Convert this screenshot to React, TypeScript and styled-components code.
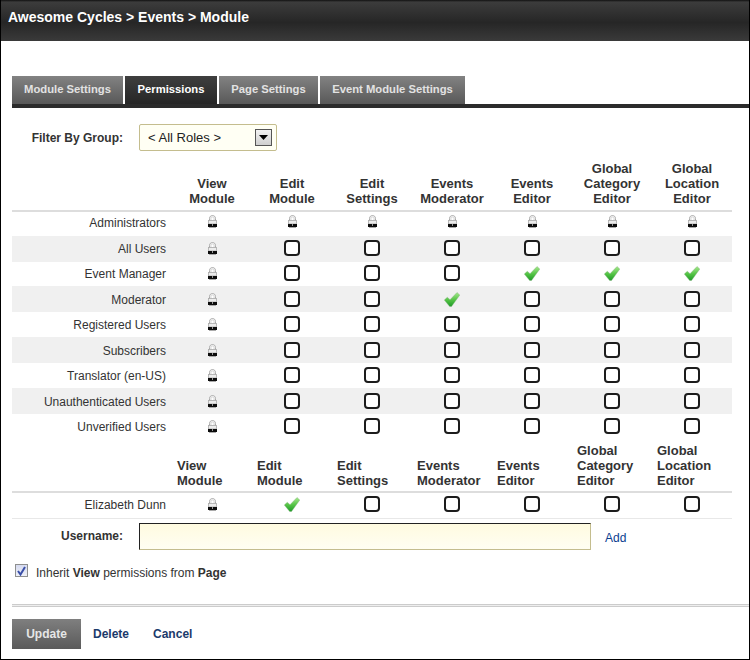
import React from "react";
import styled, { createGlobalStyle } from "styled-components";

const Global = createGlobalStyle`
  html, body { margin: 0; padding: 0; background: #fff; }
  body { font-family: "Liberation Sans", Arial, sans-serif; font-size: 12px; color: #333; }
`;

const Frame = styled.div`
  box-sizing: border-box;
  width: 750px;
  height: 660px;
  border-left: 1px solid #000;
  border-right: 1px solid #000;
  border-bottom: 1px solid #000;
  background: #fff;
  display: flex;
  flex-direction: column;
`;
const TitleBar = styled.div`
  height: 41px;
  flex: none;
  box-sizing: border-box;
  padding: 9px 0 0 7px;
  background: linear-gradient(#111 0, #3c3c3c 5%, #262626 55%, #3a3a3a 100%);
  color: #fff;
  font-size: 14px;
  line-height: 16px;
  font-weight: bold;
`;
const Body = styled.div`
  padding: 35px 0 0 11px;
  display: flex;
  flex-direction: column;
`;
const TabBar = styled.div`
  display: flex;
  gap: 2px;
  height: 32px;
  box-sizing: border-box;
  border-bottom: 4px solid #2b2b2b;
`;
const Tab = styled.div<{ $active?: boolean; $w: number }>`
  width: ${(p) => p.$w}px;
  height: 28px;
  line-height: 27px;
  text-align: center;
  font-weight: bold;
  font-size: 11.25px;
  color: ${(p) => (p.$active ? "#fff" : "#e2e2e2")};
  background: ${(p) =>
    p.$active ? "linear-gradient(#3f3f3f, #262626)" : "linear-gradient(#828282, #585858)"};
`;
const FilterRow = styled.div`
  display: flex;
  align-items: center;
  height: 27px;
  margin-top: 16px;
`;
const FieldLabel = styled.div<{ $pb?: number }>`
  width: 111px;
  text-align: right;
  font-weight: bold;
  color: #333;
  font-size: 12px;
  padding-bottom: ${(p) => p.$pb ?? 0}px;
`;
const SelectBox = styled.div`
  box-sizing: border-box;
  margin-left: 16px;
  width: 138px;
  height: 27px;
  border: 1px solid #c4bd8e;
  border-radius: 2px;
  background: #fffff4;
  display: flex;
  align-items: center;
  justify-content: space-between;
  padding: 0 4px 0 8px;
  font-size: 13px;
  color: #222;
`;
const SelectArrow = styled.div`
  box-sizing: border-box;
  width: 17px;
  height: 17px;
  border: 1px solid #555;
  background: linear-gradient(#f2f2f2, #cfcfcf);
  display: flex;
  align-items: center;
  justify-content: center;
`;
const Grid = styled.div`
  display: grid;
  grid-template-columns: 160px repeat(7, 80px);
  width: 720px;
`;
const HeadCell = styled.div<{ $left?: boolean }>`
  display: flex;
  align-items: flex-end;
  justify-content: ${(p) => (p.$left ? "flex-start" : "center")};
  text-align: ${(p) => (p.$left ? "left" : "center")};
  padding: 0 ${(p) => (p.$left ? "0" : "3px")} ${(p) => (p.$left ? "3px" : "4px")} ${(p) => (p.$left ? "5px" : "3px")};
  font-size: 13px;
  line-height: 15px;
  font-weight: bold;
  color: #333;
  border-bottom: 2px solid #ddd;
  box-sizing: border-box;
  white-space: pre-line;
`;
const HeadRow = styled(Grid)<{ $h: number; $mt: number }>`
  height: ${(p) => p.$h}px;
  margin-top: ${(p) => p.$mt}px;
`;
const Row = styled(Grid)<{ $alt?: boolean; $h: number; $line?: boolean; $pb?: number }>`
  height: ${(p) => p.$h}px;
  align-items: center;
  background: ${(p) => (p.$alt ? "#f0f0f0" : "#fff")};
  box-sizing: border-box;
  padding-bottom: ${(p) => p.$pb ?? 0}px;
  border-bottom: ${(p) => (p.$line ? "1px solid #e8e8e8" : "none")};
`;
const RowLabel = styled.div`
  text-align: right;
  padding: 2px 6px 0 0;
  font-size: 12px;
  color: #333;
`;
const Cell = styled.div`
  display: flex;
  justify-content: center;
  align-items: center;
`;
const Box = styled.span`
  display: block;
  box-sizing: border-box;
  width: 16px;
  height: 16px;
  border: 2px solid #1c1c1c;
  border-radius: 4px;
  background: #fff;
`;
const UserRow = styled.div`
  display: flex;
  align-items: center;
  height: 27px;
  margin-top: 4px;
`;
const TextInput = styled.div`
  box-sizing: border-box;
  margin-left: 16px;
  width: 452px;
  height: 27px;
  border-style: solid;
  border-width: 1px;
  border-color: #222 #c4bd8e #c4bd8e #222;
  background: linear-gradient(#fffbe0, #fffef2);
`;
const AddLink = styled.div`
  margin-left: 14px;
  color: #0a3d8f;
  font-size: 12px;
  padding-top: 2px;
`;
const InheritRow = styled.div`
  display: flex;
  align-items: flex-start;
  margin-top: 14px;
  padding-left: 3px;
  height: 17px;
  font-size: 12px;
  line-height: 16px;
  color: #333;
`;
const InheritText = styled.span`
  padding-top: 1px;
`;
const MiniCheck = styled.span`
  box-sizing: border-box;
  width: 13px;
  height: 13px;
  margin-right: 8px;
  border: 1px solid #8e8f8f;
  background: linear-gradient(#d6dbf0, #eef0f8);
  display: flex;
  align-items: center;
  justify-content: center;
`;
const Divider = styled.div`
  margin-top: 23px;
  height: 1px;
  width: 737px;
  border-top: 1px solid #ccc;
  border-bottom: 1px solid #ccc;
  background: #eee;
`;
const Actions = styled.div`
  display: flex;
  align-items: center;
  margin-top: 12px;
  height: 30px;
`;
const PrimaryBtn = styled.div`
  width: 69px;
  height: 30px;
  line-height: 30px;
  text-align: center;
  font-weight: bold;
  color: #e6e6e6;
  background: linear-gradient(#7f7f7f, #5a5a5a);
`;
const ActionLink = styled.div<{ $ml: number }>`
  margin-left: ${(p) => p.$ml}px;
  font-weight: bold;
  color: #1b3a6b;
`;

const Lock = () => (
  <svg width="9" height="13" viewBox="0 0 9 13">
    <path d="M1.500 6V3.500C1.500 1.500 3 0.500 4.500 0.500S7.500 1.500 7.500 3.500V6" fill="#f4f4f4" stroke="#aaa" strokeWidth="1" />
    <path d="M3 6V3.500C3 2.500 3.700 2 4.500 2S6 2.500 6 3.500V6" fill="#fff" stroke="#ccc" strokeWidth="0.8" />
    <rect x="0.500" y="5.500" width="8" height="3.500" fill="#ececec" stroke="#aaa" strokeWidth="0.8" />
    <rect x="0" y="9" width="9" height="3" fill="#0c0c0c" />
    <rect x="4" y="9" width="1" height="2" fill="#999" />
    <rect x="1" y="12" width="7" height="1" fill="#aaa" />
  </svg>
);
const Check = () => (
  <svg width="16" height="15" viewBox="0 0 16 15">
    <defs>
      <linearGradient id="ck" x1="0" y1="0" x2="0" y2="1">
        <stop offset="0" stopColor="#a4e88a" />
        <stop offset="0.55" stopColor="#52c244" />
        <stop offset="1" stopColor="#1f9a28" />
      </linearGradient>
    </defs>
    <path d="M0.300 8L3.300 5.300L6 7.700L13 0.500L15.800 3L7.500 14.500H5.700Z" fill="url(#ck)" stroke="#7fae7a" strokeWidth="0.4" />
  </svg>
);

type Mark = "l" | "c" | "b";
const rows: { name: string; h: number; pb: number; marks: Mark[] }[] = [
  { name: "Administrators", h: 24, pb: 5, marks: ["l", "l", "l", "l", "l", "l", "l"] },
  { name: "All Users", h: 26, pb: 2, marks: ["l", "b", "b", "b", "b", "b", "b"] },
  { name: "Event Manager", h: 24, pb: 2, marks: ["l", "b", "b", "b", "c", "c", "c"] },
  { name: "Moderator", h: 26, pb: 0, marks: ["l", "b", "b", "c", "b", "b", "b"] },
  { name: "Registered Users", h: 25, pb: 1, marks: ["l", "b", "b", "b", "b", "b", "b"] },
  { name: "Subscribers", h: 26, pb: 0, marks: ["l", "b", "b", "b", "b", "b", "b"] },
  { name: "Translator (en-US)", h: 25, pb: 1, marks: ["l", "b", "b", "b", "b", "b", "b"] },
  { name: "Unauthenticated Users", h: 26, pb: 0, marks: ["l", "b", "b", "b", "b", "b", "b"] },
  { name: "Unverified Users", h: 25, pb: 1, marks: ["l", "b", "b", "b", "b", "b", "b"] },
];
const heads = [
  "View\nModule",
  "Edit\nModule",
  "Edit\nSettings",
  "Events\nModerator",
  "Events\nEditor",
  "Global\nCategory\nEditor",
  "Global\nLocation\nEditor",
];
const renderMark = (m: Mark) => (m === "l" ? <Lock /> : m === "c" ? <Check /> : <Box />);

export default function App() {
  return (
    <Frame>
      <Global />
      <TitleBar>Awesome Cycles &gt; Events &gt; Module</TitleBar>
      <Body>
        <TabBar>
          <Tab $w={111}>Module Settings</Tab>
          <Tab $w={92} $active>Permissions</Tab>
          <Tab $w={99}>Page Settings</Tab>
          <Tab $w={145}>Event Module Settings</Tab>
        </TabBar>
        <FilterRow>
          <FieldLabel>Filter By Group:</FieldLabel>
          <SelectBox>
            &lt; All Roles &gt;
            <SelectArrow>
              <svg width="9" height="5" viewBox="0 0 9 5"><path d="M0 0H9L4.500 5Z" fill="#000" /></svg>
            </SelectArrow>
          </SelectBox>
        </FilterRow>
        <HeadRow $h={60} $mt={1}>
          <HeadCell />
          {heads.map((h) => <HeadCell key={h}>{h}</HeadCell>)}
        </HeadRow>
        {rows.map((r, i) => (
          <Row key={r.name} $alt={i % 2 === 1} $h={r.h} $pb={r.pb}>
            <RowLabel>{r.name}</RowLabel>
            {r.marks.map((m, j) => <Cell key={j}>{renderMark(m)}</Cell>)}
          </Row>
        ))}
        <HeadRow $h={54} $mt={0}>
          <HeadCell />
          {heads.map((h) => <HeadCell key={h} $left>{h}</HeadCell>)}
        </HeadRow>
        <Row $h={26} $line $pb={3}>
          <RowLabel>Elizabeth Dunn</RowLabel>
          <Cell><Lock /></Cell>
          <Cell><Check /></Cell>
          {[0, 1, 2, 3, 4].map((k) => <Cell key={k}><Box /></Cell>)}
        </Row>
        <UserRow>
          <FieldLabel $pb={2}>Username:</FieldLabel>
          <TextInput />
          <AddLink>Add</AddLink>
        </UserRow>
        <InheritRow>
          <MiniCheck>
            <svg width="9" height="10" viewBox="0 0 9 10"><path d="M1 5L3.500 8.500L8 1" fill="none" stroke="#3a4fa8" strokeWidth="2" /></svg>
          </MiniCheck>
          <InheritText>Inherit <b>View</b> permissions from <b>Page</b></InheritText>
        </InheritRow>
        <Divider />
        <Actions>
          <PrimaryBtn>Update</PrimaryBtn>
          <ActionLink $ml={12}>Delete</ActionLink>
          <ActionLink $ml={24}>Cancel</ActionLink>
        </Actions>
      </Body>
    </Frame>
  );
}
